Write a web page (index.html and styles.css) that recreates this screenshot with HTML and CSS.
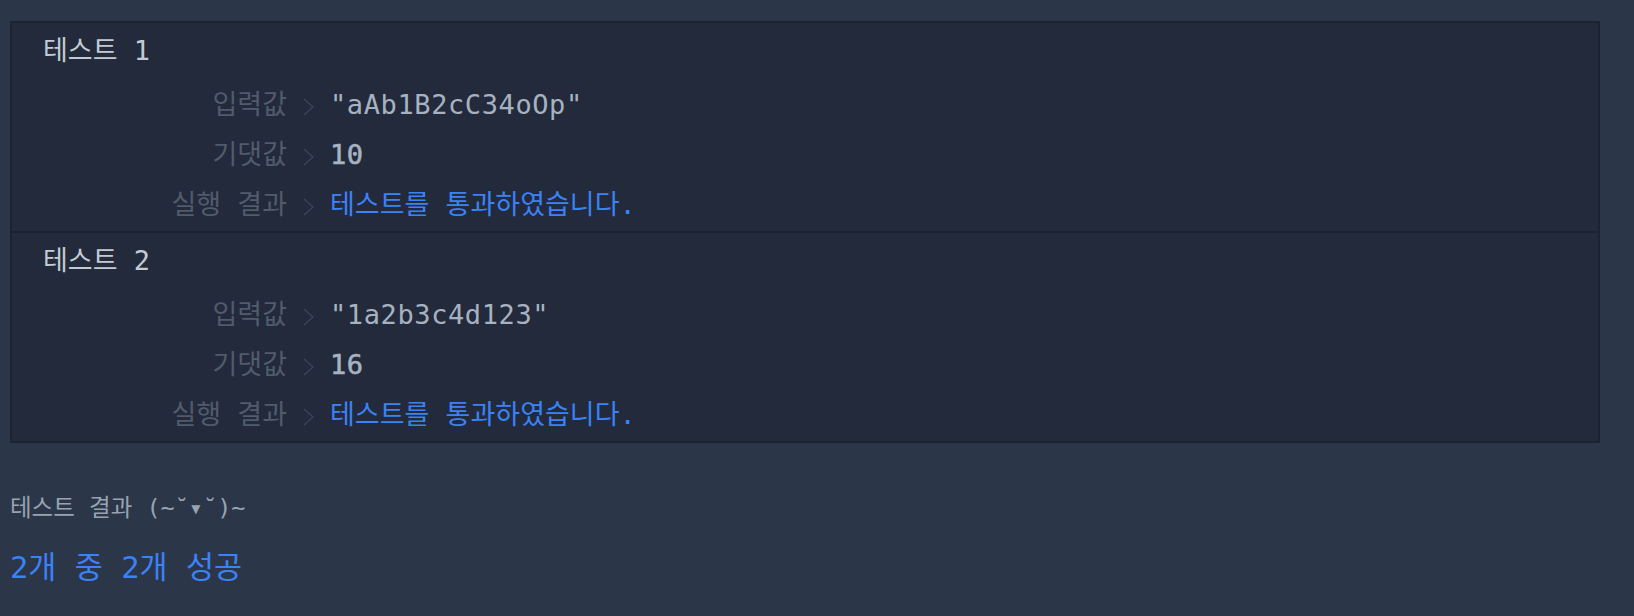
FILE: index.html
```html
<!DOCTYPE html>
<html lang="ko">
<head>
<meta charset="utf-8">
<title>테스트 결과</title>
<link rel="stylesheet" href="styles.css">
</head>
<body>
<div class="results">
  <section class="case">
    <div class="case-title">테스트 1</div>
    <div class="rows">
      <div class="label">입력값</div>
      <div class="sep"><svg width="11" height="18" viewBox="0 0 11 18"><polyline points="1,1 10,9 1,17" fill="none" stroke="#3b4658" stroke-width="1.3"/></svg></div>
      <div class="value str">"aAb1B2cC34oOp"</div>
      <div class="label">기댓값</div>
      <div class="sep"><svg width="11" height="18" viewBox="0 0 11 18"><polyline points="1,1 10,9 1,17" fill="none" stroke="#3b4658" stroke-width="1.3"/></svg></div>
      <div class="value num">10</div>
      <div class="label">실행 결과</div>
      <div class="sep"><svg width="11" height="18" viewBox="0 0 11 18"><polyline points="1,1 10,9 1,17" fill="none" stroke="#3b4658" stroke-width="1.3"/></svg></div>
      <div class="value pass">테스트를 통과하였습니다.</div>
    </div>
  </section>
  <section class="case">
    <div class="case-title">테스트 2</div>
    <div class="rows">
      <div class="label">입력값</div>
      <div class="sep"><svg width="11" height="18" viewBox="0 0 11 18"><polyline points="1,1 10,9 1,17" fill="none" stroke="#3b4658" stroke-width="1.3"/></svg></div>
      <div class="value str">"1a2b3c4d123"</div>
      <div class="label">기댓값</div>
      <div class="sep"><svg width="11" height="18" viewBox="0 0 11 18"><polyline points="1,1 10,9 1,17" fill="none" stroke="#3b4658" stroke-width="1.3"/></svg></div>
      <div class="value num">16</div>
      <div class="label">실행 결과</div>
      <div class="sep"><svg width="11" height="18" viewBox="0 0 11 18"><polyline points="1,1 10,9 1,17" fill="none" stroke="#3b4658" stroke-width="1.3"/></svg></div>
      <div class="value pass">테스트를 통과하였습니다.</div>
    </div>
  </section>
</div>
<div class="summary">
  <div class="summary-title">테스트 결과 (~˘▾˘)~</div>
  <div class="summary-count">2개 중 2개 성공</div>
</div>
</body>
</html>
```

FILE: styles.css
```css
html, body {
  background: #2b3648;
}
body {
  margin: 21px 34px 0 10px;
  font-family: "DejaVu Sans Mono", "Noto Sans CJK KR", monospace;
  color: #a7b2c0;
}
.results {
  background: #222a3b;
  border: 2px solid #1b2231;
}
.case {
  padding: 8px 0 1px 31px;
}
.case + .case {
  border-top: 2px solid #1b2231;
}
.case-title {
  line-height: 40px;
  height: 40px;
  font-size: 27px;
  color: #c3cad4;
}
.rows {
  margin-top: 9px;
  display: grid;
  grid-template-columns: 244px 43px 1fr;
  grid-auto-rows: 50px;
  align-items: center;
}
.label {
  text-align: right;
  font-size: 27px;
  color: #505b6c;
  line-height: 50px;
}
.sep {
  display: flex;
  justify-content: center;
  align-items: center;
  padding-top: 3px;
}
.sep svg {
  display: block;
}
.value {
  font-size: 27px;
  line-height: 50px;
  color: #a7b2c0;
}
.value.str {
  letter-spacing: 0.6px;
}
.value.num {
  letter-spacing: 0.5px;
  -webkit-text-stroke: 0.6px #a7b2c0;
}
.value.pass {
  color: #3b82f6;
}
.summary {
  margin-top: 50px;
}
.summary-title {
  font-size: 23.5px;
  line-height: 30px;
  color: #98a2b1;
}
.summary-count {
  margin-top: 25px;
  font-size: 30.5px;
  line-height: 40px;
  color: #3b82f6;
}
```
